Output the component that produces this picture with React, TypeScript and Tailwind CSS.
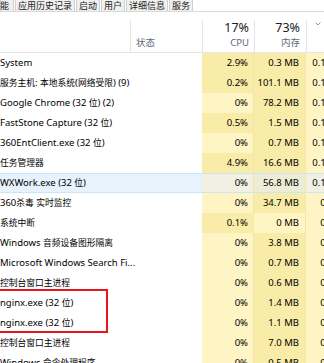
import React from "react";

type Row = { name: string; cpu: string; cpuHot: boolean; mem: string; memHot: boolean; disk: string; sel?: boolean };

const rows: Row[] = [
  { name: "System", cpu: "2.9%", cpuHot: true, mem: "0.3 MB", memHot: true, disk: "0.1 MB/秒" },
  { name: "服务主机: 本地系统(网络受限) (9)", cpu: "0.2%", cpuHot: true, mem: "101.1 MB", memHot: true, disk: "0.1 MB/秒" },
  { name: "Google Chrome (32 位) (2)", cpu: "0%", cpuHot: false, mem: "78.2 MB", memHot: true, disk: "0.1 MB/秒" },
  { name: "FastStone Capture (32 位)", cpu: "0.5%", cpuHot: true, mem: "1.5 MB", memHot: true, disk: "0.1 MB/秒" },
  { name: "360EntClient.exe (32 位)", cpu: "0%", cpuHot: false, mem: "0.7 MB", memHot: true, disk: "0.1 MB/秒" },
  { name: "任务管理器", cpu: "4.9%", cpuHot: true, mem: "16.6 MB", memHot: true, disk: "0.1 MB/秒" },
  { name: "WXWork.exe (32 位)", cpu: "0%", cpuHot: false, mem: "56.8 MB", memHot: true, disk: "0.1 MB/秒", sel: true },
  { name: "360杀毒 实时监控", cpu: "0%", cpuHot: false, mem: "34.7 MB", memHot: true, disk: "0 MB/秒" },
  { name: "系统中断", cpu: "0.1%", cpuHot: true, mem: "0 MB", memHot: false, disk: "0 MB/秒" },
  { name: "Windows 音频设备图形隔离", cpu: "0%", cpuHot: false, mem: "3.8 MB", memHot: true, disk: "0 MB/秒" },
  { name: "Microsoft Windows Search Fi...", cpu: "0%", cpuHot: false, mem: "0.7 MB", memHot: true, disk: "0 MB/秒" },
  { name: "控制台窗口主进程", cpu: "0%", cpuHot: false, mem: "0.6 MB", memHot: true, disk: "0 MB/秒" },
  { name: "nginx.exe (32 位)", cpu: "0%", cpuHot: false, mem: "1.4 MB", memHot: true, disk: "0 MB/秒" },
  { name: "nginx.exe (32 位)", cpu: "0%", cpuHot: false, mem: "1.1 MB", memHot: true, disk: "0 MB/秒" },
  { name: "控制台窗口主进程", cpu: "0%", cpuHot: false, mem: "7.0 MB", memHot: true, disk: "0 MB/秒" },
  { name: "Windows 命令处理程序", cpu: "0%", cpuHot: false, mem: "0.5 MB", memHot: true, disk: "0 MB/秒" },
];

function Mixed({ text }: { text: string }) {
  const parts = text.split(/([\u3000-\u9fff\uff00-\uffef]+)/);
  return (
    <>
      {parts.map((p, i) =>
        /[\u3000-\u9fff\uff00-\uffef]/.test(p) ? (
          <span key={i} className="text-[8.75px]">
            {p}
          </span>
        ) : (
          <span key={i}>{p}</span>
        )
      )}
    </>
  );
}

function Tab({ label, w, align = "center" }: { label: string; w: string; align?: string }) {
  return (
    <div
      className={`${w} h-[11px] bg-[#f0f0f0] border-x border-[#cfcfcf] flex items-center ${
        align === "right" ? "justify-end pr-[4px]" : "justify-center"
      } text-[9px] leading-[11px] text-[#222]`}
    >
      {label}
    </div>
  );
}

export default function App() {
  return (
    <div className="relative w-[324px] h-[363px] overflow-hidden bg-white text-black font-['Noto_Sans','Noto_Sans_CJK_SC',sans-serif]">
      {/* tabs */}
      <div className="flex h-[12px] border-b border-[#d9d9d9] gap-[1px]">
        <Tab label="能" w="w-[14px]" align="right" />
        <Tab label="应用历史记录" w="w-[60px]" />
        <Tab label="启动" w="w-[24px]" />
        <Tab label="用户" w="w-[24px]" />
        <Tab label="详细信息" w="w-[42px]" />
        <Tab label="服务" w="w-[24px]" />
      </div>

      {/* header */}
      <div className="flex items-end h-[41px] border-b border-[#e5e5e5]">
        <div className="w-[130px] h-[32px] shrink-0" />
        <div className="w-[72px] h-[32px] shrink-0 border-l border-[#e5e5e5] pt-[17px] pl-[5px] text-[9.5px] leading-[12px] text-[#5b6a80]">
          状态
        </div>
        <div className="w-[52px] h-[32px] shrink-0 border-l border-[#e5e5e5] flex flex-col items-end pr-[5px]">
          <div className="mt-[1px] text-[12.5px] leading-[14px] text-[#222]">17%</div>
          <div className="mt-[2px] text-[9.5px] leading-[12px] text-[#5b6a80]">CPU</div>
        </div>
        <div className="w-[52px] h-[32px] shrink-0 border-l border-[#e5e5e5] flex flex-col items-end pr-[6px]">
          <div className="mt-[1px] text-[12.5px] leading-[14px] text-[#222]">73%</div>
          <div className="mt-[2px] text-[9.5px] leading-[12px] text-[#5b6a80]">内存</div>
        </div>
        <div className="w-[60px] h-[32px] shrink-0 border-l border-[#e5e5e5] pl-[8px] pt-[2px]">
          <svg width="6" height="4" viewBox="0 0 6 4">
            <path d="M0.5 0.5 L3 3 L5.5 0.5" fill="none" stroke="#7d9cc4" strokeWidth="1" />
          </svg>
        </div>
      </div>

      {/* rows */}
      <div className="flex flex-col">
        {rows.map((r, i) => {
          const nameBg = r.sel ? "bg-[#e6f2fc]" : "bg-white";
          const cpuBg = r.sel ? "bg-[#f0f1e2]" : r.cpuHot ? "bg-[#f9eca8]" : "bg-[#fff4c4]";
          const memBg = r.sel ? "bg-[#ecedd6]" : r.memHot ? "bg-[#f9eca8]" : "bg-[#fff4c4]";
          const diskBg = r.sel ? "bg-[#f0f1e2]" : "bg-[#fff4c4]";
          return (
            <div key={i} className="relative flex h-[20px] text-[9.5px] leading-[20px] whitespace-nowrap">
              <div className={`w-[202px] shrink-0 overflow-hidden ${nameBg}`}>
                <Mixed text={r.name} />
              </div>
              <div className={`w-[52px] shrink-0 text-right pr-[5px] border-r border-[#f3e6a6] ${cpuBg}`}>{r.cpu}</div>
              <div className={`w-[52px] shrink-0 text-right pr-[6px] border-r border-[#f3e6a6] ${memBg}`}>{r.mem}</div>
              <div className={`w-[56px] shrink-0 text-right pr-[6px] ${diskBg}`}>{r.disk}</div>
              {r.sel && (
                <>
                  <div className="absolute left-0 right-0 top-0 h-[1px] bg-[#cde4f6]" />
                  <div className="absolute left-0 right-0 bottom-0 h-[1px] bg-[#cde4f6]" />
                </>
              )}
            </div>
          );
        })}
      </div>

      {/* red annotation box */}
      <div className="absolute left-[-4px] top-[289px] w-[112px] h-[44px] border-2 border-[#e8141c]" />
    </div>
  );
}
